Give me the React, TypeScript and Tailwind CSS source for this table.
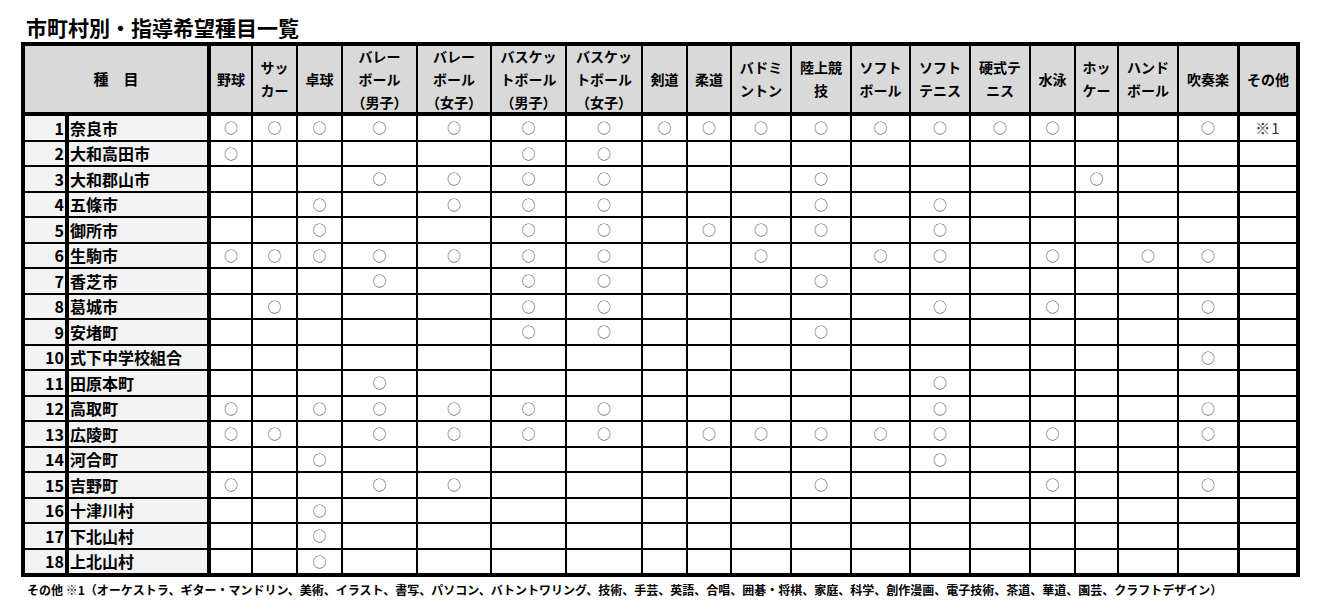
const SPORTS: string[][] = [
  ["野球"],
  ["サッ", "カー"],
  ["卓球"],
  ["バレー", "ボール", "（男子）"],
  ["バレー", "ボール", "（女子）"],
  ["バスケッ", "トボール", "（男子）"],
  ["バスケッ", "トボール", "（女子）"],
  ["剣道"],
  ["柔道"],
  ["バドミ", "ントン"],
  ["陸上競", "技"],
  ["ソフト", "ボール"],
  ["ソフト", "テニス"],
  ["硬式テ", "ニス"],
  ["水泳"],
  ["ホッ", "ケー"],
  ["ハンド", "ボール"],
  ["吹奏楽"],
  ["その他"],
];

// one char per sport column: o = ○, * = ※1, . = blank
const TOWNS: [string, string][] = [
  ["奈良市", "ooooooooooooooo..o*"],
  ["大和高田市", "o....oo............"],
  ["大和郡山市", "...oooo...o....o..."],
  ["五條市", "..o.ooo...o.o......"],
  ["御所市", "..o..oo.ooo.o......"],
  ["生駒市", "ooooooo..o.oo.o.oo."],
  ["香芝市", "...o.oo...o........"],
  ["葛城市", ".o...oo.....o.o..o."],
  ["安堵町", ".....oo...o........"],
  ["式下中学校組合", ".................o."],
  ["田原本町", "...o........o......"],
  ["高取町", "o.ooooo.....o....o."],
  ["広陵町", "oo.oooo.ooooo.o..o."],
  ["河合町", "..o.........o......"],
  ["吉野町", "o..oo.....o...o..o."],
  ["十津川村", "..o................"],
  ["下北山村", "..o................"],
  ["上北山村", "..o................"],
];

// the column before その他 has a slightly heavier rule
const edge = (i: number) => (i === 17 ? "mr-[1px]" : "");

function Mark({ value }: { value: string }) {
  if (value === "o")
    return <span className="text-[14px] font-normal text-[#505050]">○</span>;
  if (value === "*")
    return (
      <span className="text-[15px] font-normal tracking-[1px] text-[#333]">
        ※1
      </span>
    );
  return null;
}

export default function App() {
  return (
    <div className="min-h-[611px] bg-white pl-[21px] font-['Noto_Sans_CJK_JP','Noto_Sans',sans-serif] text-black">
      <h1 className="pl-[5px] pt-[15px] pb-[3px] text-[21px] leading-[24px] font-bold">
        市町村別・指導希望種目一覧
      </h1>

      <div className="grid w-[1279px] grid-cols-[42px_140px_40px_43px_43px_73px_72px_73px_74px_43px_42px_58px_58px_57px_58px_58px_43px_41px_58px_59px_56px] grid-rows-[68px_repeat(18,23.5px)] gap-[2px] bg-black p-[4px]">
        <div className="col-span-2 mr-[2px] mb-[2px] flex items-center justify-center bg-[#d9d9d9] text-[15px] font-bold">
          種　目
        </div>
        {SPORTS.map((lines, i) => (
          <div
            key={i}
            className={`mb-[2px] flex flex-col items-center justify-center bg-[#d9d9d9] text-[14px] leading-[23px] font-bold ${edge(i)}`}
          >
            {lines.map((line) => (
              <span key={line}>{line}</span>
            ))}
          </div>
        ))}

        {TOWNS.map(([name, marks], r) => (
          <div key={name} className="contents">
            <div className="mr-[2px] flex items-center justify-end bg-[#f2f2f2] pr-[1px] text-[16px] font-bold">
              {r + 1}
            </div>
            <div className="mr-[2px] flex items-center bg-[#f2f2f2] pl-[1px] text-[16px] font-bold">
              {name}
            </div>
            {marks.split("").map((m, i) => (
              <div
                key={i}
                className={`flex items-center justify-center bg-white ${edge(i)}`}
              >
                <Mark value={m} />
              </div>
            ))}
          </div>
        ))}
      </div>

      <p className="mt-[4px] pl-[6px] text-[12px] leading-[17px] font-bold">
        その他 ※1（オーケストラ、ギター・マンドリン、美術、イラスト、書写、パソコン、バトントワリング、技術、手芸、英語、合唱、囲碁・将棋、家庭、科学、創作漫画、電子技術、茶道、華道、園芸、クラフトデザイン）
      </p>
    </div>
  );
}
